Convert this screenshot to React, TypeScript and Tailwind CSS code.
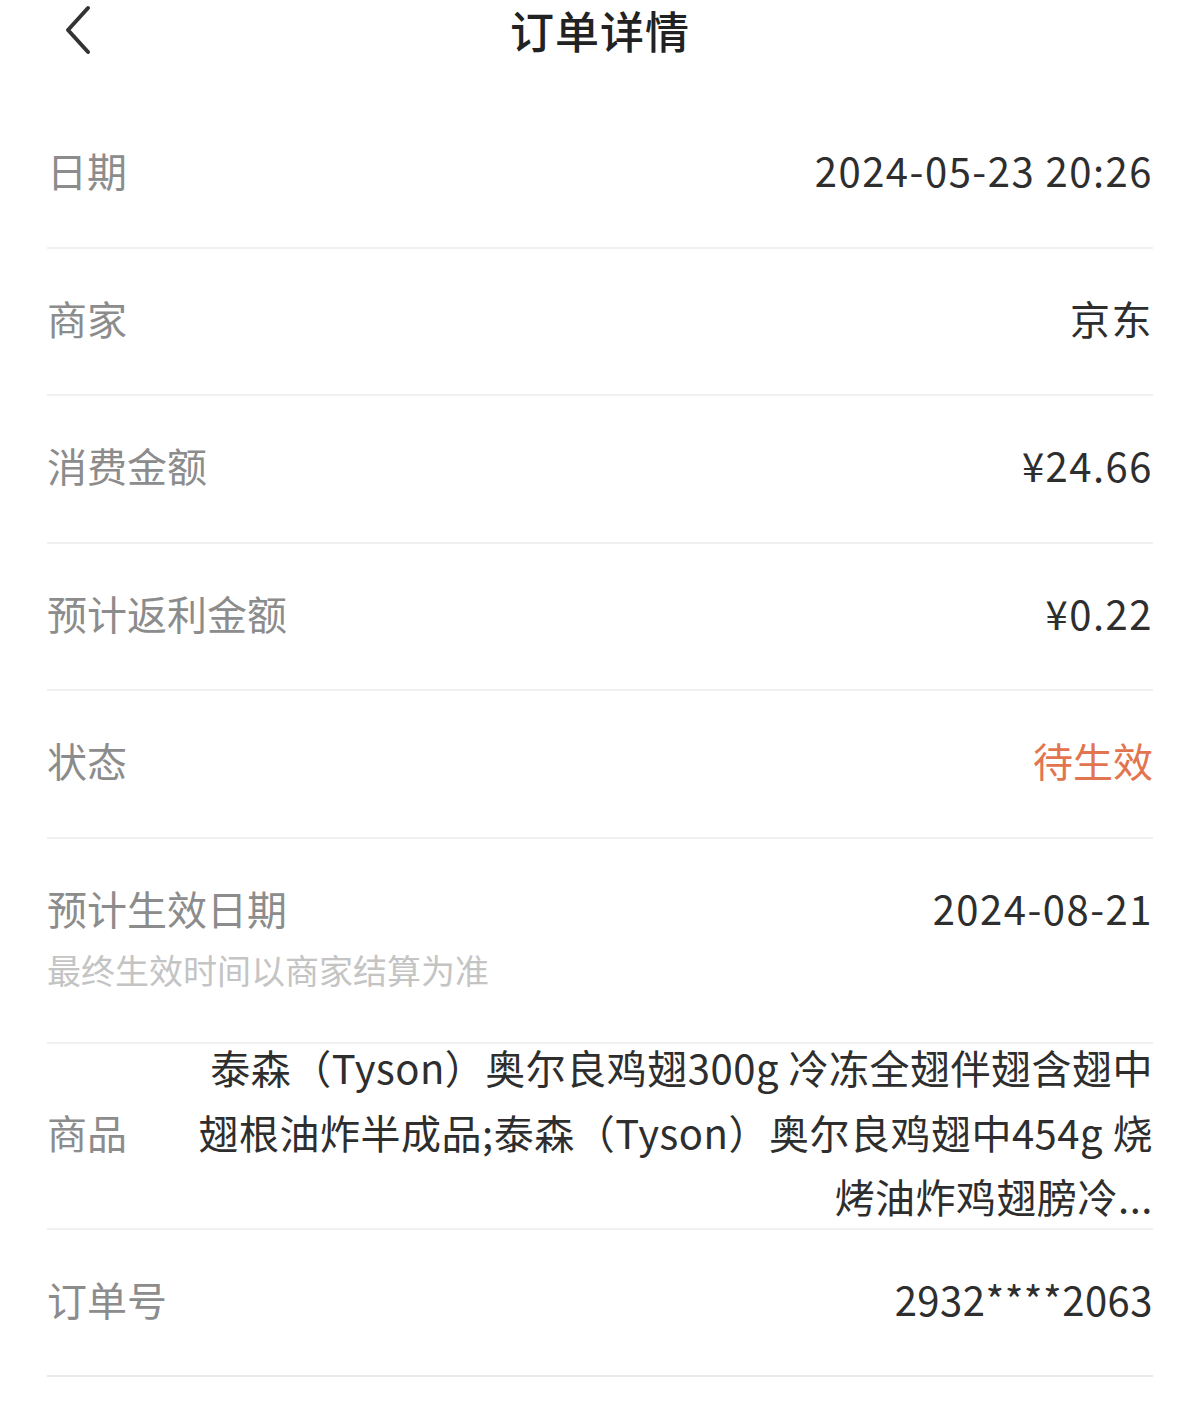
export default function App() {
  const rows = [
    { label: "日期", value: "2024-05-23 20:26" },
    { label: "商家", value: "京东" },
    { label: "消费金额", value: "¥24.66" },
    { label: "预计返利金额", value: "¥0.22" },
    { label: "状态", value: "待生效", accent: true },
  ];

  return (
    <div
      className="w-[1200px] min-h-[1428px] bg-white"
      style={{ fontFamily: '"Noto Sans CJK SC", "Noto Sans", sans-serif' }}
    >
      <header className="relative h-[101px]">
        <div className="flex h-[60px] items-center justify-center">
          <h1 className="text-[44px] leading-none font-medium text-[#222] tracking-[1px]">订单详情</h1>
        </div>
        <button className="absolute left-[56px] top-0 p-1">
          <svg width="36" height="52" viewBox="0 0 36 52" fill="none">
            <path
              d="M28 4 L8 26 L28 48"
              stroke="#333"
              strokeWidth="4"
              strokeLinecap="round"
              strokeLinejoin="round"
            />
          </svg>
        </button>
      </header>

      <div className="px-[47px]">
        {rows.map((row, i) => (
          <div
            key={i}
            className="flex h-[147.5px] items-center justify-between border-b-2 border-[#f0f0f0] pb-[7px]"
          >
            <span className="text-[40px] text-[#8c8c8c]">{row.label}</span>
            <span
              className={
                row.accent
                  ? "text-[40px] text-[#e2754f]"
                  : "text-[40px] tracking-[1.5px] text-[#2e2e2e]"
              }
            >
              {row.value}
            </span>
          </div>
        ))}

        <div className="h-[205px] border-b-2 border-[#f0f0f0] pt-[40px]">
          <div className="flex items-center justify-between leading-[58px]">
            <span className="text-[40px] text-[#8c8c8c]">预计生效日期</span>
            <span className="text-[40px] tracking-[1.5px] text-[#2e2e2e]">2024-08-21</span>
          </div>
          <p className="mt-[3px] text-[34px] leading-[60px] text-[#c4c4c4]">
            最终生效时间以商家结算为准
          </p>
        </div>

        <div className="flex h-[186px] items-center justify-between border-b-2 border-[#f0f0f0] pb-[7px]">
          <span className="text-[40px] text-[#8c8c8c]">商品</span>
          <div className="text-right text-[40px] tracking-[0.5px] leading-[64.5px] text-[#2e2e2e]">
            <div>泰森（Tyson）奥尔良鸡翅300g 冷冻全翅伴翅含翅中</div>
            <div>翅根油炸半成品;泰森（Tyson）奥尔良鸡翅中454g 烧</div>
            <div>烤油炸鸡翅膀冷...</div>
          </div>
        </div>

        <div className="flex h-[147px] items-center justify-between border-b-2 border-[#ebebeb] pb-[7px]">
          <span className="text-[40px] text-[#8c8c8c]">订单号</span>
          <span className="text-[40px] tracking-[0.5px] text-[#2e2e2e]">2932****2063</span>
        </div>
      </div>
    </div>
  );
}
